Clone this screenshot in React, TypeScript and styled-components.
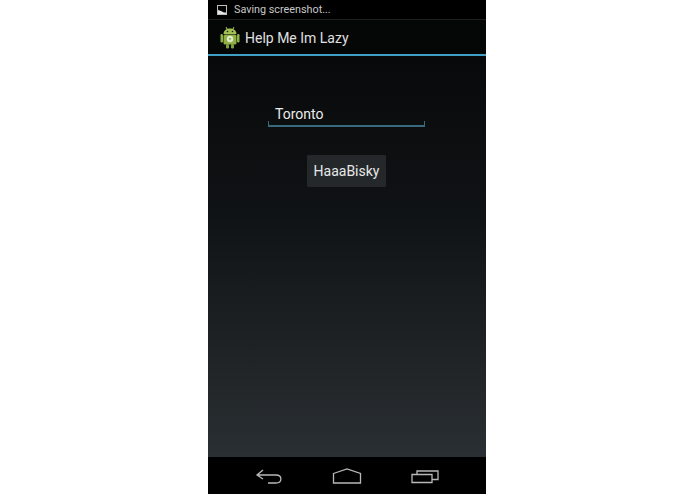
import * as React from "react";
import styled, { createGlobalStyle } from "styled-components";

const Global = createGlobalStyle`
  html, body {
    margin: 0;
    padding: 0;
    background: #ffffff;
  }
  * {
    box-sizing: border-box;
  }
`;

const Page = styled.div`
  width: 695px;
  height: 494px;
  display: flex;
  justify-content: center;
  padding-right: 1px;
  background: #ffffff;
`;

const Phone = styled.div`
  width: 278px;
  height: 494px;
  display: flex;
  flex-direction: column;
  background: #000;
  font-family: Roboto, "Noto Sans", sans-serif;
`;

const StatusBar = styled.div`
  height: 19px;
  display: flex;
  align-items: center;
  padding-left: 9px;
  gap: 7px;
  background: #000;
  color: #c8c8c8;
  font-size: 10.8px;
`;

const ActionBar = styled.div`
  height: 37px;
  display: flex;
  align-items: center;
  padding: 1px 0 0 12px;
  gap: 5px;
  background: #050606;
  border-top: 1px solid #1d1e1e;
  border-bottom: 2px solid #3f9fc4;
  color: #e0e0e0;
  font-size: 14px;
`;

const Content = styled.div`
  flex: 1;
  display: flex;
  flex-direction: column;
  align-items: center;
  padding: 45px 2px 0 0;
  background: linear-gradient(to bottom, #08090a 0%, #101315 40%, #2a2f33 100%);
`;

const Field = styled.div`
  width: 157px;
  height: 26px;
  padding: 4px 0 0 7.5px;
  color: #ececec;
  font-size: 14px;
  line-height: 18px;
  border-bottom: 2px solid #38697c;
  position: relative;
  &::before,
  &::after {
    content: "";
    position: absolute;
    bottom: 0;
    width: 1px;
    height: 4px;
    background: #38697c;
  }
  &::before {
    left: 0;
  }
  &::after {
    right: 0;
  }
`;

const Button = styled.div`
  margin-top: 28px;
  width: 79px;
  height: 32px;
  display: flex;
  align-items: center;
  justify-content: center;
  padding-left: 1px;
  border-radius: 1px;
  background: #24282b;
  color: #e8e8e8;
  font-size: 14px;
`;

const NavBar = styled.div`
  height: 37px;
  display: flex;
  align-items: center;
  justify-content: center;
  gap: 48px;
  padding-top: 1px;
  background: #000;
`;

const NavIcon = styled.svg`
  width: 30px;
  height: 18px;
  fill: none;
  stroke: #b8b8b8;
  stroke-width: 1.3;
`;

const ImageIcon = () => (
  <svg width="10" height="10" viewBox="0 0 10 10">
    <rect x="0.5" y="0.5" width="9" height="9" fill="none" stroke="#bdbdbd" />
    <path d="M1 8 V5 L4 6 L7 7.5 H9 V9 H1 Z" fill="#e6e6e6" />
  </svg>
);

const AndroidLogo = () => (
  <svg width="20" height="23" viewBox="0 0 20 23">
    <path d="M6 1 L7.5 4 M14 1 L12.5 4" stroke="#a4c25a" strokeWidth="1" />
    <path d="M3.5 8 C3.5 4.5 6.5 2.5 10 2.5 C13.5 2.5 16.5 4.5 16.5 8 Z" fill="#a3bf55" />
    <rect x="3.5" y="8.5" width="13" height="10" rx="1.5" fill="#8fb044" />
    <rect x="0.5" y="8" width="2.5" height="8.5" rx="1.2" fill="#8fb044" />
    <rect x="17" y="8" width="2.5" height="8.5" rx="1.2" fill="#8fb044" />
    <rect x="6" y="18" width="3" height="4.5" rx="1.2" fill="#7f9e3c" />
    <rect x="11" y="18" width="3" height="4.5" rx="1.2" fill="#7f9e3c" />
    <circle cx="7.5" cy="5.5" r="0.8" fill="#1a1f10" />
    <circle cx="12.5" cy="5.5" r="0.8" fill="#1a1f10" />
    <circle cx="10" cy="13" r="3.2" fill="#e4ead2" />
    <path d="M8.6 12 H11.4 L10 14.8 Z" fill="#8fb044" />
  </svg>
);

export default function App() {
  return (
    <>
      <Global />
      <Page>
        <Phone>
          <StatusBar>
            <ImageIcon />
            <span>Saving screenshot...</span>
          </StatusBar>
          <ActionBar>
            <AndroidLogo />
            <span>Help Me Im Lazy</span>
          </ActionBar>
          <Content>
            <Field>Toronto</Field>
            <Button>HaaaBisky</Button>
          </Content>
          <NavBar>
            <NavIcon viewBox="0 0 30 18">
              <path d="M9 3 L3 8 L9 12 M3.5 8 H22 C28.5 8 28.5 16 22 16 H14" />
            </NavIcon>
            <NavIcon viewBox="0 0 30 18">
              <path d="M1.5 6.5 L15 2 L28.5 6.5 V16 H1.5 Z" />
            </NavIcon>
            <NavIcon viewBox="0 0 30 18">
              <path d="M2 7.5 H22 V15.5 H2 Z M7 7.5 V4 H28 V12.5 H22" />
            </NavIcon>
          </NavBar>
        </Phone>
      </Page>
    </>
  );
}
